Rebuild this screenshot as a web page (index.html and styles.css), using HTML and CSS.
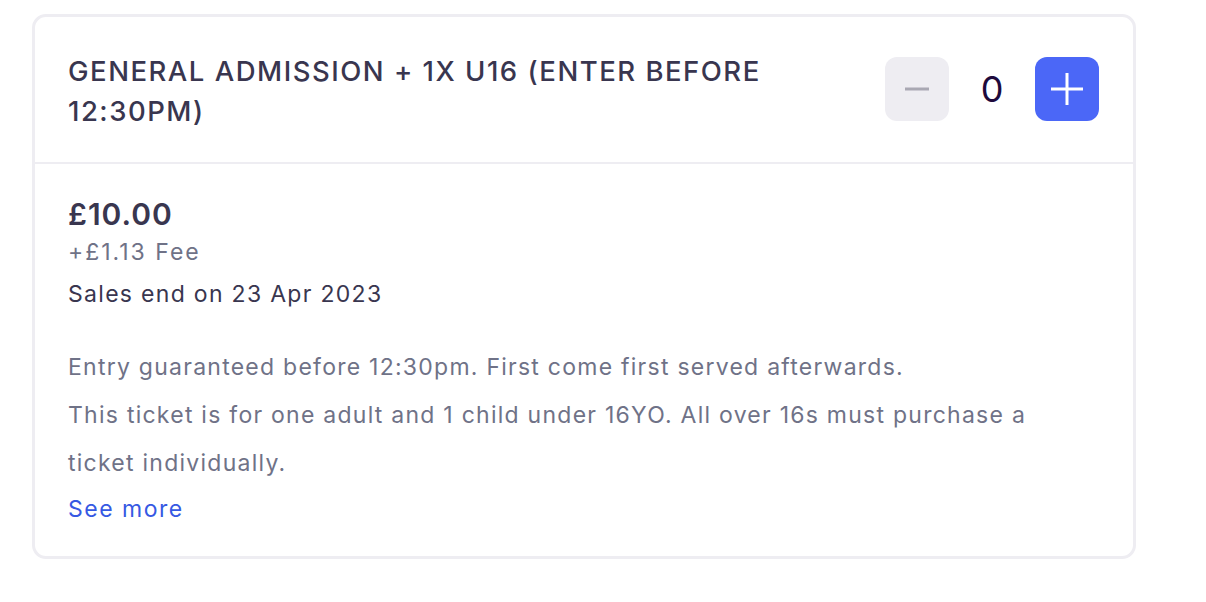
FILE: index.html
```html
<!DOCTYPE html>
<html>
  <head>
    <title>General Admission ticket</title>
    <meta charset="UTF-8">
    <meta name="viewport" content="width=device-width, initial-scale=1.0">
    <link rel="stylesheet" href="styles.css">
  </head>
  <body>
    <div class="ticket-card">
      <div class="ticket-head">
        <h2 class="ticket-title">GENERAL ADMISSION + 1X U16 (ENTER BEFORE 12:30PM)</h2>
        <div class="qty">
          <button class="qty-btn qty-minus" type="button" aria-label="Decrease">
            <svg width="24" height="24" viewBox="0 0 24 24"><rect x="0" y="10.5" width="24" height="3" fill="#a9a8b3"/></svg>
          </button>
          <span class="qty-count">0</span>
          <button class="qty-btn qty-plus" type="button" aria-label="Increase">
            <svg width="32" height="32" viewBox="0 0 32 32"><rect x="0" y="14.5" width="32" height="3" fill="#fff"/><rect x="14.5" y="0" width="3" height="32" fill="#fff"/></svg>
          </button>
        </div>
      </div>
      <div class="ticket-body">
        <p class="price">£10.00</p>
        <p class="fee">+£1.13 Fee</p>
        <p class="sales-end">Sales end on 23 Apr 2023</p>
        <div class="desc">
          <p>Entry guaranteed before 12:30pm. First come first served afterwards.</p>
          <p>This ticket is for one adult and 1 child under 16YO. All over 16s must purchase a ticket individually.</p>
        </div>
        <a class="see-more" href="#">See more</a>
      </div>
    </div>
  </body>
</html>
```

FILE: styles.css
```css
* {
  box-sizing: border-box;
  margin: 0;
  padding: 0;
}

body {
  font-family: Inter, "Noto Sans", sans-serif;
  background-color: #fff;
  color: #39364f;
  padding: 14px 0 0 32px;
}

.ticket-card {
  width: 1104px;
  border: 3px solid #eeedf2;
  border-radius: 14px;
  background-color: #fff;
}

.ticket-head {
  display: flex;
  align-items: flex-start;
  justify-content: space-between;
  padding: 34px 34px 31px 33px;
  border-bottom: 2px solid #eeedf2;
}

.ticket-title {
  font-size: 27.5px;
  line-height: 40px;
  font-weight: 500;
  letter-spacing: 1.5px;
  color: #39364f;
  max-width: 740px;
}

.qty {
  display: flex;
  align-items: center;
  margin-top: 6px;
}

.qty-btn {
  width: 64px;
  height: 64px;
  border: none;
  border-radius: 12px;
  display: flex;
  align-items: center;
  justify-content: center;
  cursor: pointer;
}

.qty-minus {
  background-color: #eeedf2;
}

.qty-plus {
  background-color: #4b67f7;
}

.qty-count {
  width: 86px;
  text-align: center;
  font-size: 36px;
  line-height: 60px;
  color: #1e0a3c;
}

.ticket-body {
  padding: 31px 33px 31px 33px;
}

.price {
  font-size: 30px;
  line-height: 38px;
  font-weight: 600;
  letter-spacing: 1px;
  color: #39364f;
}

.fee {
  font-size: 23px;
  line-height: 38px;
  letter-spacing: 2px;
  color: #6f7287;
}

.sales-end {
  margin-top: 8px;
  font-size: 23px;
  line-height: 30px;
  letter-spacing: 1.3px;
  color: #39364f;
}

.desc {
  margin-top: 34px;
  max-width: 1000px;
  font-size: 23px;
  line-height: 48px;
  letter-spacing: 1.25px;
  color: #6f7287;
}

.see-more {
  display: block;
  margin-top: 6px;
  font-size: 23px;
  line-height: 32px;
  letter-spacing: 1.5px;
  color: #3659e3;
  text-decoration: none;
}
```
